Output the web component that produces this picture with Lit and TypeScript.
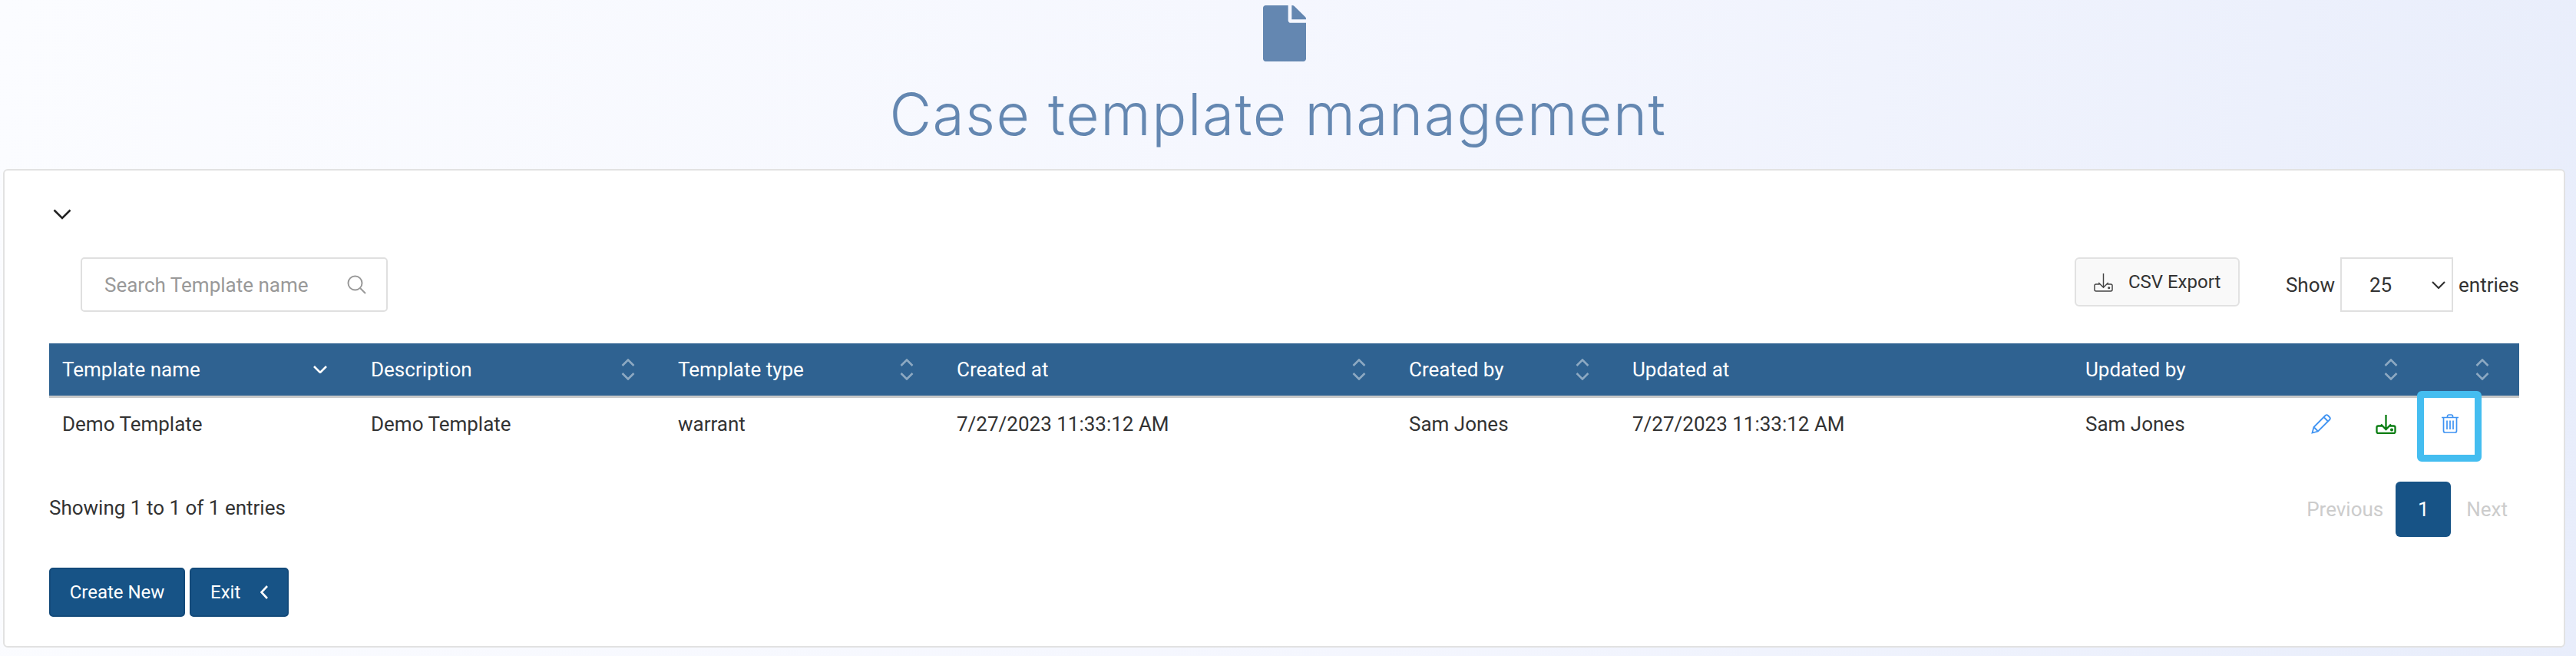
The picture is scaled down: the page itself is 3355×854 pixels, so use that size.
import { LitElement, html, css, svg } from "lit";
import { customElement } from "lit/decorators.js";

const sortIcon = html`<svg class="sort" viewBox="0 0 18 28" fill="none" stroke="currentColor" stroke-width="2.6"><path d="M1.5 9 9 1.5 16.5 9"/><path d="M1.5 19 9 26.5 16.5 19"/></svg>`;

const columns = [
  { label: "Template name", value: "Demo Template", sort: "active" },
  { label: "Description", value: "Demo Template", sort: "both" },
  { label: "Template type", value: "warrant", sort: "both" },
  { label: "Created at", value: "7/27/2023 11:33:12 AM", sort: "both" },
  { label: "Created by", value: "Sam Jones", sort: "both" },
  { label: "Updated at", value: "7/27/2023 11:33:12 AM", sort: "none" },
];

const tray = svg`<path d="M8 15.500H3A2 2 0 0 0 1 17.500V23A2 2 0 0 0 3 25H23A2 2 0 0 0 25 23V17.500A2 2 0 0 0 23 15.500H18"/><path d="M13 1V20M6.500 13.500 13 20 19.500 13.500"/><circle cx="20.500" cy="20.500" r=".9"/>`;

@customElement("app-root")
export class AppRoot extends LitElement {
  static styles = css`
    :host {
      display: block;
      min-height: 854px;
      box-sizing: border-box;
      padding: 0 14px 11px 4px;
      background: linear-gradient(100deg, #fbfcff 0%, #f4f6fe 55%, #e8edfb 100%);
      font-family: Roboto, "Liberation Sans", sans-serif;
      font-size: 26px;
      color: #333;
    }
    * { box-sizing: border-box; }
    .head {
      height: 220px;
      display: flex;
      flex-direction: column;
      align-items: center;
      padding-top: 7px;
      color: #6487b1;
    }
    .file { width: 56px; height: 73px; fill: #6487b1; display: block; }
    h1 {
      margin: 27px 16px 0 0;
      font-family: Inter, "Liberation Sans", sans-serif;
      font-weight: 300;
      font-size: 75px;
      line-height: 84px;
      letter-spacing: 1.500px;
      white-space: nowrap;
    }
    .card {
      height: 623px;
      background: #fff;
      border: 2px solid #e2e2e2;
      border-radius: 6px;
      padding: 50px 58px 38px;
    }
    .collapse { display: block; width: 24px; height: 14px; margin: 0 0 49px 5px; fill: none; stroke: #222; stroke-width: 2.600; }
    .tools { display: flex; align-items: flex-start; height: 71px; margin-bottom: 41px; }
    .search {
      width: 400px; height: 71px; margin-left: 41px;
      display: flex; align-items: center; justify-content: space-between;
      padding: 0 26px 0 29px;
      border: 2px solid #e0e0e0; border-radius: 5px;
      color: #999;
    }
    .search svg { width: 25px; height: 25px; fill: none; stroke: #999; stroke-width: 2; }
    .spacer { flex: 1; }
    .csv {
      width: 215px; height: 64px;
      display: flex; align-items: center; gap: 20px;
      padding: 0 0 0 23px;
      background: #f9f9f9;
      border: 2px solid #e2e2e2; border-radius: 6px;
      font-size: 24px; color: #333;
      margin-right: 60px;
    }
    .csv svg { width: 25px; height: 25px; fill: none; stroke: #444; stroke-width: 1.500; flex: none; }
    .length { display: flex; align-items: center; height: 71px; }
    .select {
      width: 147px; height: 71px; margin: 0 7px;
      display: flex; align-items: center; justify-content: space-between;
      padding: 0 8px 0 36px;
      border: 2px solid #e0e0e0;
    }
    .select svg { width: 18px; height: 10px; fill: none; stroke: #333; stroke-width: 2.200; }
    .grid {
      display: grid;
      grid-template-columns: 402px 400px 363px 589px 291px 590px 432px 150px;
      width: 3217px;
    }
    .th {
      height: 71px;
      background: #2f6291;
      border-bottom: 3px solid #c8c8c8;
      color: #fff;
      padding: 0 40px 0 17px;
      display: flex; align-items: center; justify-content: space-between;
      white-space: nowrap;
    }
    .th.names { padding-right: 9px; }
    .sort { width: 18px; height: 28px; color: #fff; opacity: .45; margin-right: -1px; flex: none; }
    .active { width: 18px; height: 10px; fill: none; stroke: #fff; stroke-width: 2.600; flex: none; margin-right: 0; }
    .th.last { padding-right: 40px; justify-content: flex-end; }
    .td {
      height: 67px;
      padding: 0 0 0 17px;
      display: flex; align-items: center;
      white-space: nowrap;
    }
    .td.names { justify-content: space-between; padding-right: 10px; }
    .td.trash { padding-left: 49px; }
    .actions { display: flex; gap: 58px; align-items: center; }
    .pencil { width: 26px; height: 26px; fill: none; stroke: #3f93f2; stroke-width: 1.800; display: block; }
    .dl { width: 27px; height: 26px; fill: none; stroke: #0a7d12; stroke-width: 2.300; display: block; }
    .trash-wrap { position: relative; display: block; width: 22px; height: 25px; }
    .trash-wrap svg { width: 22px; height: 25px; fill: none; stroke: #3f93f2; stroke-width: 1.700; display: block; }
    .mark {
      position: absolute;
      left: -32px; right: -30px; top: -30px; bottom: -37px;
      border: 9px solid #44bdf0;
      border-radius: 6px;
    }
    .foot { display: flex; justify-content: space-between; align-items: center; margin-top: 42px; padding-right: 15px; }
    .showing { padding-bottom: 4px; }
    .pager { display: flex; align-items: center; color: #ccc; }
    .page {
      width: 72px; height: 72px; margin: 0 20px 0 16px;
      display: flex; align-items: center; justify-content: center;
      background: #175386; color: #fff; border-radius: 6px;
    }
    .buttons { display: flex; gap: 6px; margin-top: 40px; }
    .btn {
      height: 64px;
      display: flex; align-items: center;
      background: #175386;
      border: 2px solid #134a7a;
      border-radius: 5px;
      color: #fff;
      font-size: 24px;
    }
    .create { width: 177px; justify-content: center; }
    .exit { width: 129px; padding-left: 25px; gap: 26px; }
    .exit svg { width: 10px; height: 18px; fill: none; stroke: #fff; stroke-width: 2.600; }
  `;

  render() {
    return html`
      <header class="head">
        <svg class="file" viewBox="0 0 384 512" preserveAspectRatio="none"><path d="M224 136V0H24C10.700 0 0 10.700 0 24v464c0 13.300 10.700 24 24 24h336c13.300 0 24-10.700 24-24V160H248c-13.200 0-24-10.800-24-24zm160-14.100v6.100H256V0h6.100c6.400 0 12.500 2.500 17 7l97.900 98c4.500 4.500 7 10.600 7 16.900z"/></svg>
        <h1>Case template management</h1>
      </header>
      <section class="card">
        <svg class="collapse" viewBox="0 0 24 14"><path d="M1.500 1.500 12 12 22.500 1.500"/></svg>
        <div class="tools">
          <div class="search">
            <span>Search Template name</span>
            <svg viewBox="0 0 25 25"><circle cx="10.500" cy="10.500" r="9"/><path d="M17 17l7 7"/></svg>
          </div>
          <div class="spacer"></div>
          <div class="csv">
            <svg viewBox="0 0 26 26">${tray}</svg>
            <span>CSV Export</span>
          </div>
          <div class="length">
            <span>Show</span>
            <div class="select">
              <span>25</span>
              <svg viewBox="0 0 18 10"><path d="M1 1l8 8 8-8"/></svg>
            </div>
            <span>entries</span>
          </div>
        </div>
        <div class="grid">
          ${columns.map(
            (c) => html`<div class="th">
              <span>${c.label}</span>
              ${c.sort === "both"
                ? sortIcon
                : c.sort === "active"
                  ? html`<svg class="active" viewBox="0 0 18 10"><path d="M1 1l8 8 8-8"/></svg>`
                  : ""}
            </div>`,
          )}
          <div class="th names"><span>Updated by</span>${sortIcon}</div>
          <div class="th last">${sortIcon}</div>
          ${columns.map((c) => html`<div class="td">${c.value}</div>`)}
          <div class="td names">
            <span>Sam Jones</span>
            <div class="actions">
              <svg class="pencil" viewBox="0 0 26 26"><path d="M1.500 24.500 3.500 17 18.500 2a2.500 2.500 0 0 1 3.500 0l2 2a2.500 2.500 0 0 1 0 3.500L9 22.500ZM3.500 17 9 22.500M16.500 4 22 9.500"/></svg>
              <svg class="dl" viewBox="0 0 26 26">${tray}</svg>
            </div>
          </div>
          <div class="td trash">
            <span class="trash-wrap">
              <svg viewBox="0 0 22 25"><path d="M0 4.500H22M7.500 4.500V3A2 2 0 0 1 9.500 1h3a2 2 0 0 1 2 2v1.500M2.500 4.500V22A2 2 0 0 0 4.500 24H17.500A2 2 0 0 0 19.500 22V4.500M7 8.500V20M11 8.500V20M15 8.500V20"/></svg>
              <span class="mark"></span>
            </span>
          </div>
        </div>
        <div class="foot">
          <span class="showing">Showing 1 to 1 of 1 entries</span>
          <div class="pager">
            <span>Previous</span>
            <span class="page">1</span>
            <span>Next</span>
          </div>
        </div>
        <div class="buttons">
          <div class="btn create">Create New</div>
          <div class="btn exit">
            <span>Exit</span>
            <svg viewBox="0 0 10 18"><path d="M9 1 1.500 9 9 17"/></svg>
          </div>
        </div>
      </section>
    `;
  }
}
